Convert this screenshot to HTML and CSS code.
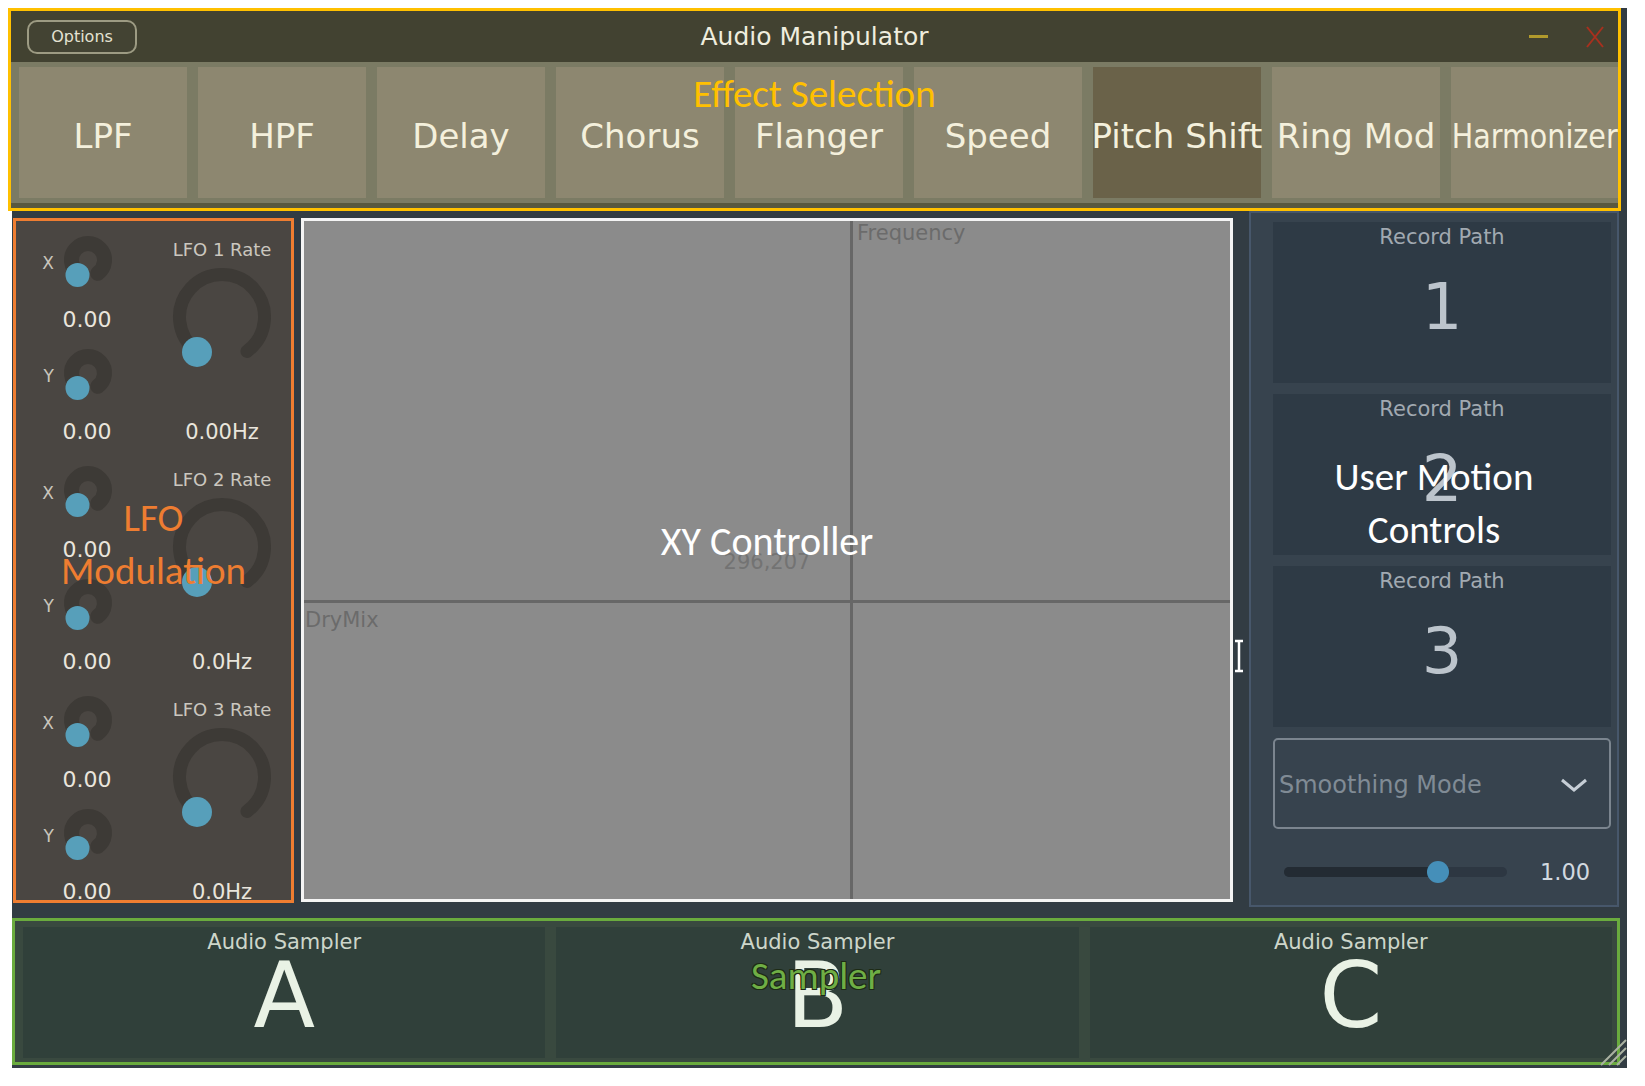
FILE: index.html
```html
<!DOCTYPE html>
<html lang="en">
<head>
  <meta charset="UTF-8">
  <meta name="viewport" content="width=device-width, initial-scale=1.0">
  <link rel="stylesheet" href="styles.css">
  <title>Audio Manipulator</title>
</head>
<body>

  <div class="app_window">

    <!-- title bar + effect buttons (yellow) -->
    <header class="effect_area">
      <div class="title_bar">
        <div class="title_left"><button class="options_btn">Options</button></div>
        <h1 class="app_title">Audio Manipulator</h1>
        <div class="title_right">
          <span class="win_min"></span>
          <svg class="win_close" viewBox="0 0 20 22"><path d="M2 1L18 21M18 1L2 21"/></svg>
        </div>
      </div>
      <ul class="effect_list">
        <li>LPF</li>
        <li>HPF</li>
        <li>Delay</li>
        <li>Chorus</li>
        <li>Flanger</li>
        <li>Speed</li>
        <li class="on">Pitch Shift</li>
        <li>Ring Mod</li>
        <li><span class="squeeze">Harmonizer</span></li>
      </ul>
      <p class="note note_effect">Effect Selection</p>
    </header>

    <div class="main_row">

      <!-- LFO (orange) -->
      <section class="lfo_panel">

        <div class="lfo">
          <div class="lfo_xy">
            <div class="mini">
              <span class="mini_label">X</span>
              <svg viewBox="-30 -30 60 60"><path class="ring" d="M-9.7 13.35A16.5 16.5 0 1 1 9.7 13.35"/><circle class="dot" cx="-10.5" cy="15" r="12"/></svg>
            </div>
            <p class="mini_val first">0.00</p>
            <div class="mini">
              <span class="mini_label">Y</span>
              <svg viewBox="-30 -30 60 60"><path class="ring" d="M-9.7 13.35A16.5 16.5 0 1 1 9.7 13.35"/><circle class="dot" cx="-10.5" cy="15" r="12"/></svg>
            </div>
            <p class="mini_val second">0.00</p>
          </div>
          <div class="lfo_rate">
            <p class="rate_label">LFO 1 Rate</p>
            <svg class="rate_knob" viewBox="-55 -55 110 110"><path class="ring_big" d="M-24.98 34.38A42.5 42.5 0 1 1 24.98 34.38"/><circle class="dot" cx="-25" cy="35" r="15"/></svg>
            <p class="rate_val">0.00Hz</p>
          </div>
        </div>

        <div class="lfo">
          <div class="lfo_xy">
            <div class="mini">
              <span class="mini_label">X</span>
              <svg viewBox="-30 -30 60 60"><path class="ring" d="M-9.7 13.35A16.5 16.5 0 1 1 9.7 13.35"/><circle class="dot" cx="-10.5" cy="15" r="12"/></svg>
            </div>
            <p class="mini_val first">0.00</p>
            <div class="mini">
              <span class="mini_label">Y</span>
              <svg viewBox="-30 -30 60 60"><path class="ring" d="M-9.7 13.35A16.5 16.5 0 1 1 9.7 13.35"/><circle class="dot" cx="-10.5" cy="15" r="12"/></svg>
            </div>
            <p class="mini_val second">0.00</p>
          </div>
          <div class="lfo_rate">
            <p class="rate_label">LFO 2 Rate</p>
            <svg class="rate_knob" viewBox="-55 -55 110 110"><path class="ring_big" d="M-24.98 34.38A42.5 42.5 0 1 1 24.98 34.38"/><circle class="dot" cx="-25" cy="35" r="15"/></svg>
            <p class="rate_val">0.0Hz</p>
          </div>
        </div>

        <div class="lfo">
          <div class="lfo_xy">
            <div class="mini">
              <span class="mini_label">X</span>
              <svg viewBox="-30 -30 60 60"><path class="ring" d="M-9.7 13.35A16.5 16.5 0 1 1 9.7 13.35"/><circle class="dot" cx="-10.5" cy="15" r="12"/></svg>
            </div>
            <p class="mini_val first">0.00</p>
            <div class="mini">
              <span class="mini_label">Y</span>
              <svg viewBox="-30 -30 60 60"><path class="ring" d="M-9.7 13.35A16.5 16.5 0 1 1 9.7 13.35"/><circle class="dot" cx="-10.5" cy="15" r="12"/></svg>
            </div>
            <p class="mini_val second">0.00</p>
          </div>
          <div class="lfo_rate">
            <p class="rate_label">LFO 3 Rate</p>
            <svg class="rate_knob" viewBox="-55 -55 110 110"><path class="ring_big" d="M-24.98 34.38A42.5 42.5 0 1 1 24.98 34.38"/><circle class="dot" cx="-25" cy="35" r="15"/></svg>
            <p class="rate_val">0.0Hz</p>
          </div>
        </div>

        <p class="note note_lfo">LFO<br>Modulation</p>
      </section>

      <!-- XY pad -->
      <section class="xy_pad">
        <span class="axis axis_v"></span>
        <span class="axis axis_h"></span>
        <span class="pad_label label_freq">Frequency</span>
        <span class="pad_label label_dry">DryMix</span>
        <span class="pad_pos">296,207</span>
        <p class="note note_xy">XY Controller</p>
        <svg class="ibeam" viewBox="0 0 12 34"><path d="M2 2H10M6 2V32M2 32H10"/></svg>
      </section>

      <!-- record paths / smoothing -->
      <section class="motion_panel">
        <div class="rec_box"><p class="rec_label">Record Path</p><p class="rec_num">1</p></div>
        <div class="rec_box"><p class="rec_label">Record Path</p><p class="rec_num">2</p></div>
        <div class="rec_box"><p class="rec_label">Record Path</p><p class="rec_num">3</p></div>
        <div class="combo">
          <span>Smoothing Mode</span>
          <svg class="chevron" viewBox="0 0 28 16"><path d="M2 3L14 13L26 3"/></svg>
        </div>
        <div class="slider_row">
          <div class="track">
            <span class="track_fill" style="width:69%"></span>
            <span class="thumb" style="left:69%"></span>
          </div>
          <span class="slider_val">1.00</span>
        </div>
        <p class="note note_motion">User Motion<br>Controls</p>
      </section>

    </div>

    <!-- samplers (green) -->
    <section class="sampler_area">
      <div class="sampler"><p class="samp_label">Audio Sampler</p><p class="samp_letter">A</p></div>
      <div class="sampler"><p class="samp_label">Audio Sampler</p><p class="samp_letter">B</p></div>
      <div class="sampler"><p class="samp_label">Audio Sampler</p><p class="samp_letter">C</p></div>
      <p class="note note_sampler">Sampler</p>
    </section>

    <svg class="grip" viewBox="0 0 30 30"><path d="M29 4L4 29M29 12L12 29M29 20L20 29"/></svg>

  </div>

</body>
</html>
```

FILE: styles.css
```css
*{
  box-sizing:border-box;
}

body,h1,p,ul,li{
  margin:0px; padding:0px; list-style:none;
}

body{
  background:#fff; font-family:"DejaVu Sans", Verdana, sans-serif;
}

.app_window{
  width:1615px; height:1060px; margin:8px 0 0 12px; background:#323c43; position:relative;
}

/* header */

.effect_area{
  width:1613px; height:203px; margin-left:-4px; border:3px solid #ffc000; position:relative; overflow:hidden;
}

.title_bar{
  height:51px; background:#424231; display:grid; grid-template-columns:1fr auto 1fr; align-items:center;
}

.options_btn{
  margin-left:16px; width:110px; height:34px; border:2px solid #9d9b83; border-radius:10px;
  background:#434333; color:#e4e2d2; font:16px "DejaVu Sans", sans-serif;
}

.app_title{
  font-weight:normal; font-size:25px; color:#efedde;
}

.title_right{
  display:flex; justify-content:flex-end; align-items:center; padding-right:13px;
}

.win_min{
  width:19px; height:3px; background:#b19a2c;
}

.win_close{
  width:20px; height:22px; margin-left:37px; fill:none; stroke:#a7301e; stroke-width:2;
}

.effect_list{
  display:flex; gap:11px; height:146px; padding:5px 0 5px 8px; background:#7b7b64; border-bottom:5px solid #58583f;
}

.effect_list li{
  flex:0 0 168px; min-width:0; background:#8d8770; display:flex; align-items:center; justify-content:center;
  padding-top:6px; color:#f4f0dc; font-size:34px; white-space:nowrap;
}

.effect_list li.on{
  background:#6a6249;
}

.squeeze{
  display:inline-block; transform:scaleX(.84);
}

/* overlay captions */

.note{
  position:absolute; left:0; right:0; text-align:center; font-family:Carlito, Lato, sans-serif;
  font-size:39px; line-height:53px; pointer-events:none;
}

.note_effect{ top:56px; color:#ffc000; }
.note_lfo{ top:270px; color:#ee7d31; }
.note_xy{ top:294px; color:#fff; font-size:40px; }
.note_motion{ top:237px; color:#fff; }
.note_sampler{
  top:28px; color:#6fae45;
  text-shadow:1px 1px 0 #1d2b15, -1px -1px 0 #1d2b15, 1px -1px 0 #1d2b15, -1px 1px 0 #1d2b15;
}

/* main */

.main_row{
  display:flex; align-items:flex-start; height:696px;
}

.lfo_panel{
  width:281px; height:685px; margin:7px 0 0 1px; border:3px solid #ee7d31; background:#4a4642;
  position:relative; overflow:hidden;
}

.lfo{
  display:flex; height:230px;
}

.lfo_xy{
  width:137px; padding-top:9px;
}

.mini{
  display:flex; align-items:center; height:60px;
}

.mini svg{
  display:block; width:60px; height:60px;
}

.mini_label{
  width:42px; text-align:right; padding:6px 4px 0 0; font-size:17px; color:#c9c5bc;
}

.mini_val{
  text-align:center; padding-left:5px; font-size:22px; color:#e9e5dc;
}

.mini_val.first{
  height:46px; line-height:46px; margin-top:7px;
}

.mini_val.second{
  height:34px; line-height:34px; margin-top:12px;
}

.lfo_rate{
  flex:1; text-align:center; padding-top:17px;
}

.rate_label{
  font-size:18px; line-height:24px; color:#cbc7bf;
}

.rate_knob{
  display:block; width:110px; height:110px; margin:0 auto;
}

.rate_val{
  font-size:21px; line-height:34px; margin-top:43px; color:#e9e5dc;
}

.ring{
  fill:none; stroke:#3d3a36; stroke-width:15; stroke-linecap:round;
}

.ring_big{
  fill:none; stroke:#3d3a36; stroke-width:13; stroke-linecap:round;
}

.dot{
  fill:#579fba;
}

.xy_pad{
  width:932px; height:684px; margin:7px 0 0 7px; border:3px solid #f4f4f4; background:#8b8b8b; position:relative;
}

.axis{
  position:absolute; background:#676767;
}

.axis_v{
  left:546px; top:0; bottom:0; width:3px;
}

.axis_h{
  top:379px; left:0; right:0; height:3px;
}

.pad_label{
  position:absolute; font-size:21px; line-height:24px; color:#6b6b6b;
}

.label_freq{ left:553px; top:0; }
.label_dry{ left:1px; top:387px; }

.pad_pos{
  position:absolute; left:0; right:0; top:329px; text-align:center; font-size:21px; line-height:24px; color:#737373;
}

.ibeam{
  position:absolute; left:929px; top:418px; width:12px; height:34px; fill:none;
  stroke:#fff; stroke-width:2.5;
}

.motion_panel{
  width:370px; height:696px; margin-left:16px; border:2px solid #47576b; background:#37434e;
  padding:9px 6px 0 22px; position:relative;
}

.rec_box{
  height:161px; margin-bottom:11px; padding-top:3px; background:#2e3a45; text-align:center;
}

.rec_label{
  font-size:21px; line-height:24px; color:#a1a9b1;
}

.rec_num{
  font-size:64px; line-height:80px; margin-top:18px; color:#bcc4cc;
}

.combo{
  height:91px; margin-top:1px; border:2px solid #7b858f; border-radius:5px; display:flex; align-items:center;
  justify-content:space-between; padding:2px 21px 0 4px; font-size:24px; color:#808b95;
}

.chevron{
  width:28px; height:16px; fill:none; stroke:#c6ced6; stroke-width:3;
}

.slider_row{
  display:flex; align-items:center; height:42px; margin-top:22px; padding-left:11px;
}

.track{
  width:223px; height:10px; border-radius:5px; background:#2d3742; position:relative;
}

.track_fill{
  position:absolute; left:0; top:0; bottom:0; border-radius:5px; background:#232b33;
}

.thumb{
  position:absolute; top:50%; width:22px; height:22px; margin:-11px 0 0 -11px; border-radius:50%; background:#458fb9;
}

.slider_val{
  margin-left:33px; font-size:22.5px; color:#d2d9e0;
}

/* samplers */

.sampler_area{
  width:1608px; height:147px; margin-top:11px; border:3px solid #6aab3e; background:#39493f;
  display:flex; gap:11px; padding:6px 5px 4px 8px; position:relative;
}

.sampler{
  flex:1; background:#30403a; text-align:center; padding-top:3px;
}

.samp_label{
  font-size:21px; line-height:24px; color:#cdd6ca;
}

.samp_letter{
  font-size:90px; line-height:90px; margin-top:-3px; color:#e9f2e5;
}

.grip{
  position:absolute; right:0; bottom:2px; width:30px; height:30px; fill:none; stroke:#aab2a2; stroke-width:2;
}
```
